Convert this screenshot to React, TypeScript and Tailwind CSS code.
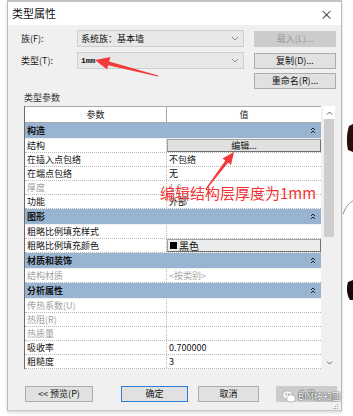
import React from 'react';

type Row =
  | { group: string }
  | { k: string; v?: string; dim?: boolean; kind?: 'btn' | 'color' };

const rows: Row[] = [
  { group: '构造' },
  { k: '结构', v: '编辑...', kind: 'btn' },
  { k: '在插入点包络', v: '不包络' },
  { k: '在端点包络', v: '无' },
  { k: '厚度', v: '1.0', dim: true },
  { k: '功能', v: '外部' },
  { group: '图形' },
  { k: '粗略比例填充样式' },
  { k: '粗略比例填充颜色', v: '黑色', kind: 'color' },
  { group: '材质和装饰' },
  { k: '结构材质', v: '<按类别>', dim: true },
  { group: '分析属性' },
  { k: '传热系数(U)', dim: true },
  { k: '热阻(R)', dim: true },
  { k: '热质量', dim: true },
  { k: '吸收率', v: '0.700000' },
  { k: '粗糙度', v: '3' },
];

const Collapse = () => (
  <svg width="6" height="7" viewBox="0 0 6 7" className="shrink-0">
    <path d="M1 3 L3 1 L5 3 M1 6 L3 4 L5 6" stroke="#222" strokeWidth="1" fill="none" />
  </svg>
);

const Chevron = () => (
  <svg width="8" height="5" viewBox="0 0 8 5">
    <path d="M1 1 L4 4 L7 1" stroke="#8a8a8a" strokeWidth="1" fill="none" />
  </svg>
);

const Btn = ({ label, disabled, def, w }: { label: string; disabled?: boolean; def?: boolean; w: string }) => (
  <div
    className={`${w} h-[16px] flex items-center justify-center text-[9px] border ${
      disabled
        ? 'bg-[#cccccc] border-[#cccccc] text-[#9a9a9a]'
        : def
        ? 'bg-[#e1e1e1] border-[#2a7fd4] text-[#111]'
        : 'bg-[#e1e1e1] border-[#adadad] text-[#111]'
    }`}
  >
    {label}
  </div>
);

export default function App() {
  return (
    <div className="relative w-[353px] h-[416px] bg-white overflow-hidden flex font-['Noto_Sans_CJK_SC','Noto_Sans',sans-serif]">
      <div className="w-[7px] shrink-0" />

      {/* dialog */}
      <div className="w-[335px] h-[411px] shrink-0 bg-[#f0f0f0] border-x border-b border-t-2 border-t-[#c4c4c4] border-x-[#b8b8b8] border-b-[#c8c8c8] shadow-[0_2px_3px_rgba(0,0,0,0.15)] flex flex-col">
        <div className="h-[24px] bg-white flex items-center justify-between pl-[4px] pr-[8px]">
          <span className="text-[11px] text-[#111]">类型属性</span>
          <span className="text-[13px] text-[#333] leading-none">×</span>
        </div>

        <div className="flex flex-col pl-[13px] pt-[5px]">
          <div className="flex items-center h-[17px]">
            <span className="w-[56px] text-[9px] text-[#222]">族(F):</span>
            <div className="w-[167px] h-[17px] bg-[#e8e8e8] border border-[#cfcfcf] flex items-center justify-between pl-[3px] pr-[4px]">
              <span className="text-[9px] text-[#111]">系统族：基本墙</span>
              <Chevron />
            </div>
            <div className="w-[10px]" />
            <Btn label="载入(L)..." disabled w="w-[82px]" />
          </div>
          <div className="flex items-center h-[17px] mt-[5px]">
            <span className="w-[56px] text-[9px] text-[#222]">类型(T):</span>
            <div className="w-[167px] h-[17px] bg-[#e8e8e8] border border-[#cfcfcf] flex items-center justify-between pl-[3px] pr-[4px]">
              <span className="text-[8px] font-bold text-[#111] font-['Liberation_Mono',monospace]">1mm</span>
              <Chevron />
            </div>
            <div className="w-[10px]" />
            <Btn label="复制(D)..." w="w-[82px]" />
          </div>
          <div className="flex items-center h-[16px] mt-[4px]">
            <div className="w-[233px]" />
            <Btn label="重命名(R)..." w="w-[82px]" />
          </div>
          <div className="h-[14px] mt-[2px] pl-[3px] text-[9px] text-[#333] leading-[14px]">类型参数</div>
        </div>

        {/* table + scrollbar */}
        <div className="flex mt-[1px] ml-[16px] h-[263px]">
          <div className="w-[297px] flex flex-col border-l border-l-[#6a6a6a]">
            <div className="flex h-[17px] bg-white border-t border-b border-[#a8a8a8] text-[9px] text-[#222]">
              <div className="w-[142px] flex items-center justify-center border-r border-[#a8a8a8]">参数</div>
              <div className="flex-1 flex items-center justify-center">值</div>
            </div>
            {rows.map((r, i) =>
              'group' in r ? (
                <div key={i} className="h-[16px] bg-[#99b4d1] flex items-center justify-between pl-[2px] pr-[5px] text-[9px] font-bold text-[#111] border-b border-[#f0f0f0]">
                  <span>{r.group}</span>
                  <Collapse />
                </div>
              ) : (
                <div key={i} className="h-[14px] flex bg-white border-b border-dotted border-[#b8b8b8] text-[9px]">
                  <div className={`w-[142px] flex items-center pl-[2px] border-r border-dotted border-[#b8b8b8] ${r.dim ? 'text-[#a0a0a0]' : 'text-[#111]'}`}>
                    {r.k}
                  </div>
                  {r.kind === 'btn' ? (
                    <div className="flex-1 flex items-center justify-center bg-[#e1e1e1] border border-[#a0a0a0] border-b-[#707070] border-r-[#707070] text-[#111]">
                      {r.v}
                    </div>
                  ) : r.kind === 'color' ? (
                    <div className="flex-1 flex items-center gap-[2px] pl-[2px] bg-[#ececec] border border-[#a0a0a0] border-b-[#707070] border-r-[#707070] text-[#111]">
                      <span className="w-[7px] h-[7px] bg-black" />
                      <span className="text-[10px]">{r.v}</span>
                    </div>
                  ) : (
                    <div className={`flex-1 flex items-center pl-[2px] ${r.dim ? 'text-[#a8a8a8]' : 'text-[#111]'}`}>{r.v}</div>
                  )}
                </div>
              )
            )}
          </div>
          <div className="w-[2px]" />
          <div className="w-[12px] flex flex-col bg-[#f0f0f0]">
            <div className="h-[13px] bg-white flex items-center justify-center">
              <svg width="7" height="4" viewBox="0 0 7 4"><path d="M1 3.5 L3.5 1 L6 3.5" stroke="#606060" fill="none" /></svg>
            </div>
            <div className="h-[118px] mx-[1px] bg-[#cdcdcd]" />
            <div className="flex-1" />
            <div className="h-[13px] flex items-center justify-center">
              <svg width="7" height="4" viewBox="0 0 7 4"><path d="M1 0.5 L3.5 3 L6 0.5" stroke="#606060" fill="none" /></svg>
            </div>
          </div>
        </div>

        {/* bottom buttons */}
        <div className="flex items-center mt-[17px] ml-[17px]">
          <Btn label="<<  预览(P)" w="w-[68px]" />
          <div className="w-[28px]" />
          <Btn label="确定" def w="w-[67px]" />
          <div className="w-[10px]" />
          <Btn label="取消" w="w-[61px]" />
          <div className="w-[17px]" />
          <Btn label="应用" disabled w="w-[61px]" />
        </div>
        <div className="flex justify-end pr-[2px] pt-[1px]">
          <svg width="7" height="7" viewBox="0 0 7 7">
            <rect x="5" y="1" width="1" height="1" fill="#a0a0a0" />
            <rect x="3" y="3" width="1" height="1" fill="#a0a0a0" />
            <rect x="5" y="3" width="1" height="1" fill="#a0a0a0" />
            <rect x="1" y="5" width="1" height="1" fill="#a0a0a0" />
            <rect x="3" y="5" width="1" height="1" fill="#a0a0a0" />
            <rect x="5" y="5" width="1" height="1" fill="#a0a0a0" />
          </svg>
        </div>
      </div>

      {/* background drawing peeking on the right */}
      <div className="flex-1 relative">
        <svg width="11" height="416" viewBox="0 0 11 416" className="absolute inset-0">
          <path d="M7 126 C5 132 4 142 6 150 L11 152 L11 124 Z" fill="#2b0c0c" />
          <path d="M1 214 C4 206 8 202 11 201" stroke="#8a6a6a" strokeWidth="0.8" fill="none" />
          <path d="M6 282 C4 288 5 296 8 300 L11 300 L11 280 Z" fill="#1c0808" />
        </svg>
      </div>

      {/* annotations */}
      <svg width="353" height="416" viewBox="0 0 353 416" className="absolute inset-0 pointer-events-none">
        <polygon points="95,60 110.5,57 109.1,61.5 158.2,75.4 157.9,76.6 108.1,65.3 107.1,69.4" fill="#f23a3a" />
        <polygon points="234,152 231,165 228.2,162.6 206.6,189.3 205.5,188.8 225.4,160.6 222.4,158.6" fill="#f23a3a" />
      </svg>
      <div className="absolute left-[160px] top-[185px] text-[15px] leading-none text-[#f43434] whitespace-nowrap">
        编辑结构层厚度为1mm
      </div>

      {/* watermark */}
      <div className="absolute left-[282px] top-[390px] flex items-center gap-[2px]">
        <svg width="14" height="13" viewBox="0 0 14 13">
          <ellipse cx="5.5" cy="5" rx="5" ry="4.2" fill="#f4f4f4" stroke="#9a9a9a" strokeWidth="0.6" />
          <ellipse cx="9" cy="8.5" rx="4.2" ry="3.6" fill="#ffffff" stroke="#9a9a9a" strokeWidth="0.6" />
          <circle cx="4" cy="4.3" r="0.7" fill="#777" />
          <circle cx="7" cy="4.3" r="0.7" fill="#777" />
        </svg>
        <span className="text-[9px] text-white [text-shadow:0_0_1px_#333,0_0_1px_#333]">BIM技知面</span>
      </div>
    </div>
  );
}
